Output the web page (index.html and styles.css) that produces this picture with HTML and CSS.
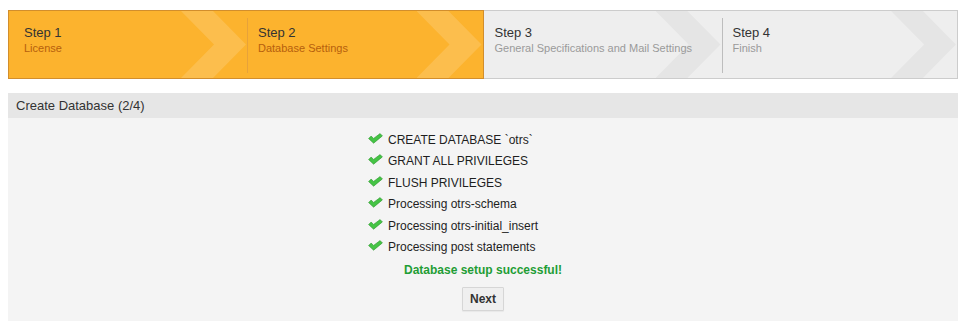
FILE: index.html
```html
<!DOCTYPE html>
<html lang="en">
<head>
  <meta charset="UTF-8">
  <title>Installer - Create Database</title>
  <link rel="stylesheet" href="styles.css">
</head>
<body>
  <div class="wizard">
    <div class="wizard-group wizard-group--done">
      <div class="step">
        <div class="step__body">
          <div class="step__title">Step 1</div>
          <div class="step__label">License</div>
        </div>
      </div>
      <div class="step">
        <div class="step__body">
          <div class="step__title">Step 2</div>
          <div class="step__label">Database Settings</div>
        </div>
      </div>
    </div>
    <div class="wizard-group wizard-group--todo">
      <div class="step">
        <div class="step__body">
          <div class="step__title">Step 3</div>
          <div class="step__label">General Specifications and Mail Settings</div>
        </div>
      </div>
      <div class="step">
        <div class="step__body">
          <div class="step__title">Step 4</div>
          <div class="step__label">Finish</div>
        </div>
      </div>
    </div>
  </div>

  <div class="panel">
    <div class="panel__header">Create Database (2/4)</div>
    <div class="panel__body">
      <ul class="result-list">
        <li class="result-list__item">
          <svg class="check" viewBox="0 0 15 11" aria-hidden="true"><path d="M0.6 5.6 L3.1 3.1 L5.6 5.4 L12.1 0.6 L14.4 2.9 L5.6 10.2 Z"/></svg>
          CREATE DATABASE `otrs`
        </li>
        <li class="result-list__item">
          <svg class="check" viewBox="0 0 15 11" aria-hidden="true"><path d="M0.6 5.6 L3.1 3.1 L5.6 5.4 L12.1 0.6 L14.4 2.9 L5.6 10.2 Z"/></svg>
          GRANT ALL PRIVILEGES
        </li>
        <li class="result-list__item">
          <svg class="check" viewBox="0 0 15 11" aria-hidden="true"><path d="M0.6 5.6 L3.1 3.1 L5.6 5.4 L12.1 0.6 L14.4 2.9 L5.6 10.2 Z"/></svg>
          FLUSH PRIVILEGES
        </li>
        <li class="result-list__item">
          <svg class="check" viewBox="0 0 15 11" aria-hidden="true"><path d="M0.6 5.6 L3.1 3.1 L5.6 5.4 L12.1 0.6 L14.4 2.9 L5.6 10.2 Z"/></svg>
          Processing otrs-schema
        </li>
        <li class="result-list__item">
          <svg class="check" viewBox="0 0 15 11" aria-hidden="true"><path d="M0.6 5.6 L3.1 3.1 L5.6 5.4 L12.1 0.6 L14.4 2.9 L5.6 10.2 Z"/></svg>
          Processing otrs-initial_insert
        </li>
        <li class="result-list__item">
          <svg class="check" viewBox="0 0 15 11" aria-hidden="true"><path d="M0.6 5.6 L3.1 3.1 L5.6 5.4 L12.1 0.6 L14.4 2.9 L5.6 10.2 Z"/></svg>
          Processing post statements
        </li>
      </ul>

      <p class="success">Database setup successful!</p>

      <div class="actions">
        <button type="button" class="button">Next</button>
      </div>
    </div>
  </div>
</body>
</html>
```

FILE: styles.css
```css
:root {
  --orange: #fcb32e;
  --orange-border: #d28e2c;
  --orange-line: #e7a23a;
  --orange-text: #b6600d;
  --grey: #eeeeee;
  --grey-border: #cccccc;
  --grey-line: #bdbdbd;
  --text-dark: #333;
  --text-muted: #9a9a9a;
  --green: #1f9d35;
}

body {
  margin: 10px 8px;
  font-family: "Liberation Sans", Arial, sans-serif;
  color: var(--text-dark);
  background: #fff;
}

/* Wizard steps */
.wizard {
  display: flex;
}

.wizard-group {
  flex: 1;
  display: flex;
  border: 1px solid var(--grey-border);
  background: var(--grey);
}

.wizard-group--done {
  border-color: var(--orange-border);
  background: var(--orange);
}

.wizard-group--todo {
  border-left: none;
}

.step {
  flex: 1;
  position: relative;
  padding: 7px 0 5px;
}

.step:first-child {
  flex: 0 0 238px;
}

/* chevron in the background of each step */
.step::after {
  content: "";
  position: absolute;
  top: 0;
  right: 0;
  bottom: 0;
  width: 66px;
  background: rgba(0, 0, 0, 0.035);
  clip-path: polygon(0 0, 32px 0, 65px 50%, 32px 100%, 0 100%, 33px 50%);
}

.wizard-group--done .step::after {
  background: rgba(255, 255, 255, 0.15);
}

.step__body {
  position: relative;
  z-index: 1;
  box-sizing: border-box;
  height: 55px;
  padding: 7px 10px 0;
  border-left: 1px solid transparent;
}

.step + .step .step__body {
  border-left-color: var(--grey-line);
}

.wizard-group--done .step + .step .step__body {
  border-left-color: var(--orange-line);
}

.wizard-group--done .step:first-child .step__body {
  padding-left: 14px;
}

.step__title {
  font-size: 13px;
  line-height: 16px;
  color: var(--text-dark);
}

.step__label {
  font-size: 11px;
  line-height: 14px;
  color: var(--text-muted);
}

.wizard-group--done .step__label {
  color: var(--orange-text);
}

/* Content panel */
.panel {
  margin-top: 14px;
}

.panel__header {
  height: 25px;
  line-height: 25px;
  padding-left: 8px;
  font-size: 13px;
  background: #e6e6e6;
}

.panel__body {
  background: #f4f4f4;
  padding: 12px 0 10px;
}

.result-list {
  list-style: none;
  margin: 0 auto;
  padding: 0;
  width: 230px;
}

.result-list__item {
  display: flex;
  align-items: flex-start;
  gap: 5px;
  font-size: 12px;
  line-height: 21.4px;
  color: #1e1e1e;
  white-space: nowrap;
}

.check {
  flex: none;
  width: 15px;
  height: 11px;
  margin-top: 3px;
  fill: #45c445;
  stroke: #2b962b;
  stroke-width: 0.6;
  stroke-linejoin: round;
}

.success {
  margin: 4px 0 0;
  text-align: center;
  font-size: 12px;
  line-height: 16px;
  font-weight: bold;
  color: var(--green);
}

.actions {
  margin-top: 9px;
  text-align: center;
}

.button {
  font-family: inherit;
  font-size: 12px;
  font-weight: bold;
  line-height: 14px;
  color: var(--text-dark);
  padding: 4px 7px;
  background: #efefef;
  border: 1px solid #d6d6d6;
  border-radius: 1px;
  box-shadow: 0 1px 1px rgba(0, 0, 0, 0.05);
  cursor: pointer;
}
```
